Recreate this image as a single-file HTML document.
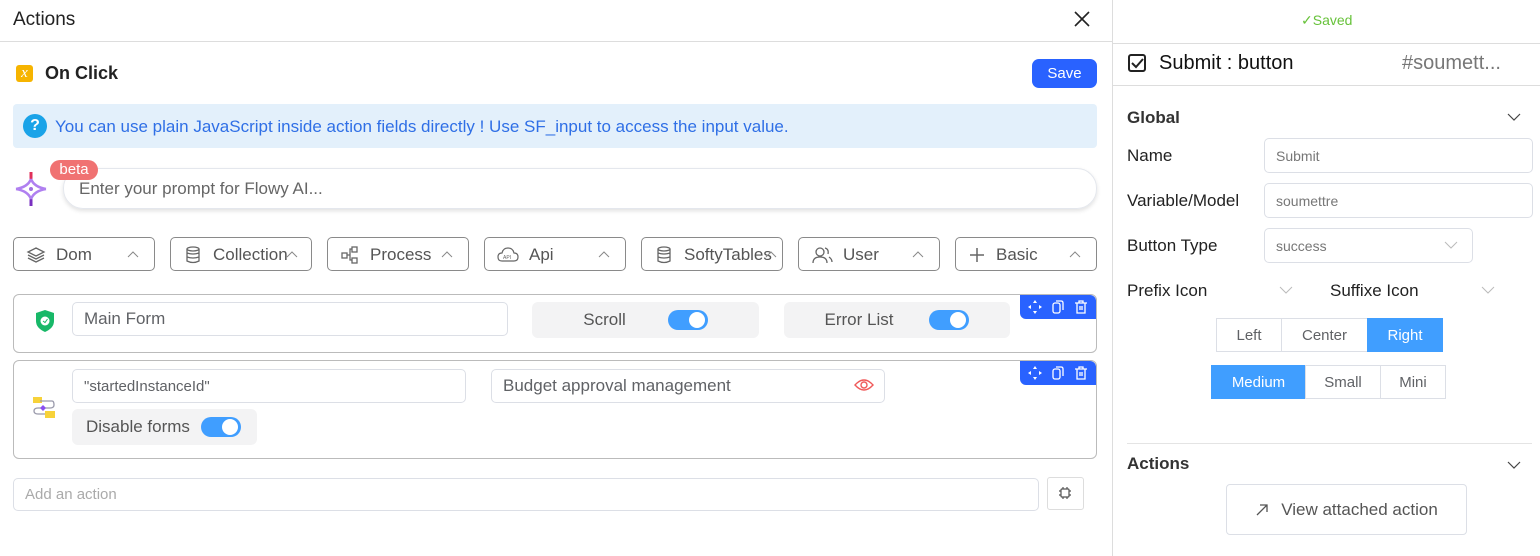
<!DOCTYPE html>
<html><head><meta charset="utf-8"><style>
*{box-sizing:border-box;margin:0;padding:0}
body{width:1540px;height:556px;background:#fff;font-family:"Liberation Sans",sans-serif;color:#222;position:relative;overflow:hidden}
.a{position:absolute}
.inp{position:absolute;border:1px solid #dcdfe6;border-radius:5px;background:#fff;color:#606266;display:flex;align-items:center;padding-left:11px}
.dd{position:absolute;top:237px;width:142px;height:34px;border:1px solid #8a8a8a;border-radius:5px;display:flex;align-items:center;font-size:17px;color:#555;padding-top:1px}
.dd svg.i{margin:0 10px 0 12px}
.dd .car{position:absolute;right:14px;top:9px}
.tg{display:inline-block;width:40px;height:20px;border-radius:10px;background:#409eff;position:relative}
.tg:after{content:"";position:absolute;right:3px;top:2px;width:16px;height:16px;border-radius:50%;background:#fff}
.pill{position:absolute;background:#f3f3f4;border-radius:6px;display:flex;align-items:center;justify-content:center;font-size:17px;color:#555}
.tools{position:absolute;right:0;top:0;width:76px;height:24px;background:#2962ff;border-radius:0 6px 0 6px;display:flex;align-items:center;justify-content:space-around;padding:0 4px}
.lbl{position:absolute;font-size:17px;color:#222}
.bg{position:absolute;display:flex}
.bg div{border:1px solid #dcdfe6;margin-left:-1px;display:flex;align-items:center;justify-content:center;font-size:15px;color:#606266;height:34px}
.bg div.on{background:#409eff;color:#fff;border-color:#409eff}
</style></head><body>
<div class="a" style="left:13px;top:9px;font-size:19px;color:#222">Actions</div>
<svg class="a" style="left:1074px;top:11px" width="16" height="16"><path d="M1 1L15 15M15 1L1 15" stroke="#222" stroke-width="1.6"/></svg>
<div class="a" style="left:0;top:41px;width:1112px;height:1px;background:#ddd"></div>
<div class="a" style="left:1112px;top:0;width:1px;height:556px;background:#ddd"></div>

<div class="a" style="left:16px;top:65px;width:17px;height:17px;background:#f6b400;border-radius:3px;color:#fff;font-family:'Liberation Serif',serif;font-style:italic;font-size:15px;text-align:center;line-height:16px">x</div>
<div class="a" style="left:45px;top:63px;font-size:18px;font-weight:bold">On Click</div>
<div class="a" style="left:1032px;top:59px;width:65px;height:29px;background:#2962ff;border-radius:7px;color:#fff;font-size:15px;text-align:center;line-height:29px">Save</div>

<div class="a" style="left:13px;top:104px;width:1084px;height:44px;background:#e3f0fb;border-radius:4px"></div>
<div class="a" style="left:23px;top:114px;width:24px;height:24px;border-radius:50%;background:#1aa3e8;color:#fff;font-weight:bold;font-size:16px;text-align:center;line-height:24px">?</div>
<div class="a" style="left:55px;top:117px;font-size:17px;color:#2f6fe6">You can use plain JavaScript inside action fields directly ! Use SF_input to access the input value.</div>

<svg class="a" style="left:13px;top:171px" width="36" height="36" viewBox="0 0 36 36"><path d="M18 1 L18 10" stroke="#e0305a" stroke-width="3"/><path d="M18 26 L18 35" stroke="#7a30c0" stroke-width="3"/><path d="M3 18 Q15 16 18 8 M33 18 Q21 16 18 8 M3 18 Q15 20 18 28 M33 18 Q21 20 18 28" stroke="#b080f0" stroke-width="2.5" fill="none"/><circle cx="18" cy="18" r="2" fill="#a070e0"/></svg>
<div class="a" style="left:63px;top:168px;width:1034px;height:41px;border:1px solid #e4e7ed;border-radius:20px;box-shadow:0 2px 4px rgba(0,0,0,.12);font-size:17px;color:#666;padding:10px 15px">Enter your prompt for Flowy AI...</div>
<div class="a" style="left:50px;top:160px;width:48px;height:20px;background:#f07272;border-radius:10px;color:#fff;font-size:15px;text-align:center;line-height:20px">beta</div>

<div class="dd" style="left:13px"><svg class="i" width="20" height="20" viewBox="0 0 20 20" fill="none" stroke="#666" stroke-width="1.3"><path d="M10 3L18 7 10 11 2 7Z M2 10L10 14 18 10 M2 13L10 17 18 13"/></svg>Dom<svg class="car" width="14" height="14"><path d="M2 10L7 5 12 10" stroke="#888" fill="none"/></svg></div>
<div class="dd" style="left:170px"><svg class="i" width="20" height="20" viewBox="0 0 20 20" fill="none" stroke="#666" stroke-width="1.3"><ellipse cx="10" cy="4" rx="6" ry="2"/><path d="M4 4V16Q10 19 16 16V4M4 8Q10 10 16 8M4 12Q10 14 16 12"/></svg>Collection<svg class="car" style="right:12px" width="14" height="14"><path d="M2 10L7 5 12 10" stroke="#888" fill="none"/></svg></div>
<div class="dd" style="left:327px"><svg class="i" width="20" height="20" viewBox="0 0 20 20" fill="none" stroke="#666" stroke-width="1.3"><rect x="2" y="8" width="5" height="5"/><rect x="12" y="2" width="5" height="5"/><rect x="12" y="13" width="5" height="5"/><path d="M7 10H10V4H12M10 10V15H12"/></svg>Process<svg class="car" width="14" height="14"><path d="M2 10L7 5 12 10" stroke="#888" fill="none"/></svg></div>
<div class="dd" style="left:484px"><svg class="i" width="22" height="20" viewBox="0 0 22 20" fill="none" stroke="#666" stroke-width="1.2"><path d="M5 16Q1 16 1 12Q1 8 5 8Q6 3 11 3Q16 3 17 8Q21 8 21 12Q21 16 17 16Z"/><text x="6" y="14" font-size="5" fill="#666" stroke="none">API</text></svg>Api<svg class="car" width="14" height="14"><path d="M2 10L7 5 12 10" stroke="#888" fill="none"/></svg></div>
<div class="dd" style="left:641px"><svg class="i" width="20" height="20" viewBox="0 0 20 20" fill="none" stroke="#666" stroke-width="1.3"><ellipse cx="10" cy="4" rx="6" ry="2"/><path d="M4 4V16Q10 19 16 16V4M4 8Q10 10 16 8M4 12Q10 14 16 12"/></svg>SoftyTables<svg class="car" style="right:4px" width="14" height="14"><path d="M2 10L7 5 12 10" stroke="#888" fill="none"/></svg></div>
<div class="dd" style="left:798px"><svg class="i" width="22" height="20" viewBox="0 0 22 20" fill="none" stroke="#666" stroke-width="1.3"><circle cx="9" cy="7" r="4"/><path d="M2 18Q2 12 9 12Q16 12 16 18M14 3Q18 4 17 9M18 12Q21 14 21 17"/></svg>User<svg class="car" width="14" height="14"><path d="M2 10L7 5 12 10" stroke="#888" fill="none"/></svg></div>
<div class="dd" style="left:955px"><svg class="i" width="18" height="18"><path d="M9 2V16M2 9H16" stroke="#666" stroke-width="1.5"/></svg>Basic<svg class="car" width="14" height="14"><path d="M2 10L7 5 12 10" stroke="#888" fill="none"/></svg></div>

<div class="a" style="left:13px;top:294px;width:1084px;height:59px;border:1px solid #bbb;border-radius:6px">
  <div class="tools"><svg width="14" height="14" viewBox="0 0 14 14" fill="#fff"><path d="M7 0L9 3H5ZM7 14L5 11H9ZM0 7L3 5V9ZM14 7L11 9V5Z"/></svg><svg width="14" height="14" fill="none" stroke="#fff" stroke-width="1.3"><rect x="2" y="3" width="7" height="10" rx="2"/><path d="M5 1H10Q12 1 12 3V10"/></svg><svg width="14" height="14" fill="none" stroke="#fff" stroke-width="1.3"><path d="M1 3H13M5 3V1H9V3M3 3V13H11V3M6 6V10M8 6V10"/></svg></div>
</div>
<svg class="a" style="left:35px;top:309px" width="20" height="24" viewBox="0 0 20 24"><path d="M10 1L19 4V12Q19 19 10 23Q1 19 1 12V4Z" fill="#18b868"/><circle cx="10" cy="12" r="4.5" fill="#fff"/><path d="M8 12L10 13.5 12.5 10" stroke="#18b868" fill="none"/></svg>
<div class="inp" style="left:72px;top:302px;width:436px;height:34px;font-size:17px">Main Form</div>
<div class="pill" style="left:532px;top:302px;width:227px;height:36px"><span style="margin-right:42px">Scroll</span><span class="tg"></span></div>
<div class="pill" style="left:784px;top:302px;width:226px;height:36px"><span style="margin-right:36px">Error List</span><span class="tg"></span></div>

<div class="a" style="left:13px;top:360px;width:1084px;height:99px;border:1px solid #bbb;border-radius:6px">
  <div class="tools"><svg width="14" height="14" viewBox="0 0 14 14" fill="#fff"><path d="M7 0L9 3H5ZM7 14L5 11H9ZM0 7L3 5V9ZM14 7L11 9V5Z"/></svg><svg width="14" height="14" fill="none" stroke="#fff" stroke-width="1.3"><rect x="2" y="3" width="7" height="10" rx="2"/><path d="M5 1H10Q12 1 12 3V10"/></svg><svg width="14" height="14" fill="none" stroke="#fff" stroke-width="1.3"><path d="M1 3H13M5 3V1H9V3M3 3V13H11V3M6 6V10M8 6V10"/></svg></div>
</div>
<svg class="a" style="left:32px;top:396px" width="24" height="24" viewBox="0 0 24 24"><rect x="1" y="1" width="9" height="6" fill="#f7d23a"/><rect x="13" y="15" width="10" height="7" fill="#f7d23a"/><path d="M8 5H20Q22 5 22 9Q22 12 18 12H6Q2 12 2 15Q2 18 6 18H13" stroke="#99a" fill="none" stroke-width="1.3"/><path d="M11 9L14 12 11 15 8 12Z" fill="#8a4ff0"/></svg>
<div class="inp" style="left:72px;top:369px;width:394px;height:34px;font-size:15px">"startedInstanceId"</div>
<div class="inp" style="left:491px;top:369px;width:394px;height:34px;font-size:17px">Budget approval management</div>
<svg class="a" style="left:854px;top:377px" width="20" height="16" viewBox="0 0 20 16" fill="none" stroke="#f05a5a" stroke-width="1.4"><path d="M1 8Q10 -2 19 8Q10 18 1 8Z"/><circle cx="10" cy="8" r="3"/></svg>
<div class="pill" style="left:72px;top:409px;width:185px;height:36px;justify-content:flex-start;padding-left:14px"><span style="margin-right:11px">Disable forms</span><span class="tg"></span></div>

<div class="inp" style="left:13px;top:478px;width:1026px;height:33px;font-size:15px;color:#aaa">Add an action</div>
<div class="a" style="left:1047px;top:477px;width:37px;height:33px;border:1px solid #ddd;border-radius:3px"></div>
<svg class="a" style="left:1058px;top:486px" width="14" height="14" fill="none" stroke="#555" stroke-width="1.2"><rect x="3" y="3" width="8" height="8" rx="1"/><path d="M5 1V3M9 1V3M5 11V13M9 11V13M1 5H3M1 9H3M11 5H13M11 9H13"/></svg>

<div class="a" style="left:1301px;top:12px;font-size:14px;color:#67c23a">✓Saved</div>
<div class="a" style="left:1113px;top:43px;width:427px;height:1px;background:#ddd"></div>
<div class="a" style="left:1128px;top:54px;width:18px;height:18px;border:2px solid #222;border-radius:3px"></div>
<svg class="a" style="left:1131px;top:57px" width="13" height="12"><path d="M1 6L5 10 12 2" stroke="#222" stroke-width="2" fill="none"/></svg>
<div class="a" style="left:1159px;top:52px;font-size:20px;color:#111">Submit : button</div>
<div class="a" style="left:1402px;top:52px;font-size:20px;color:#777">#soumett...</div>
<div class="a" style="left:1113px;top:85px;width:427px;height:1px;background:#ddd"></div>

<div class="a" style="left:1127px;top:108px;font-size:17px;font-weight:bold;color:#333">Global</div>
<svg class="a" style="left:1507px;top:112px" width="14" height="10"><path d="M1 2L7 8 13 2" stroke="#444" fill="none" stroke-width="1.2"/></svg>
<div class="lbl" style="left:1127px;top:146px">Name</div>
<div class="inp" style="left:1264px;top:138px;width:269px;height:35px;font-size:14px;color:#777">Submit</div>
<div class="lbl" style="left:1127px;top:191px">Variable/Model</div>
<div class="inp" style="left:1264px;top:183px;width:269px;height:35px;font-size:14px;color:#777">soumettre</div>
<div class="lbl" style="left:1127px;top:236px">Button Type</div>
<div class="inp" style="left:1264px;top:228px;width:209px;height:35px;font-size:14px;color:#777">success</div>
<svg class="a" style="left:1444px;top:240px" width="14" height="10"><path d="M1 2L7 8 13 2" stroke="#bbb" fill="none"/></svg>
<div class="lbl" style="left:1127px;top:281px">Prefix Icon</div>
<svg class="a" style="left:1279px;top:285px" width="14" height="10"><path d="M1 2L7 8 13 2" stroke="#bbb" fill="none"/></svg>
<div class="lbl" style="left:1330px;top:281px">Suffixe Icon</div>
<svg class="a" style="left:1481px;top:285px" width="14" height="10"><path d="M1 2L7 8 13 2" stroke="#bbb" fill="none"/></svg>

<div class="bg" style="left:1217px;top:318px"><div style="width:66px">Left</div><div style="width:87px">Center</div><div class="on" style="width:76px">Right</div></div>
<div class="bg" style="left:1212px;top:365px"><div class="on" style="width:95px">Medium</div><div style="width:76px">Small</div><div style="width:66px">Mini</div></div>

<div class="a" style="left:1127px;top:443px;width:405px;height:1px;background:#e4e4e4"></div>
<div class="a" style="left:1127px;top:454px;font-size:17px;font-weight:bold;color:#333">Actions</div>
<svg class="a" style="left:1507px;top:460px" width="14" height="10"><path d="M1 2L7 8 13 2" stroke="#444" fill="none" stroke-width="1.2"/></svg>
<div class="a" style="left:1226px;top:484px;width:241px;height:51px;border:1px solid #dcdfe6;border-radius:4px;font-size:17px;color:#555;display:flex;align-items:center;justify-content:center"><svg width="14" height="14" style="margin-right:12px"><path d="M2 12L12 2M5 2H12V9" stroke="#555" fill="none" stroke-width="1.3"/></svg>View attached action</div>
</body></html>
